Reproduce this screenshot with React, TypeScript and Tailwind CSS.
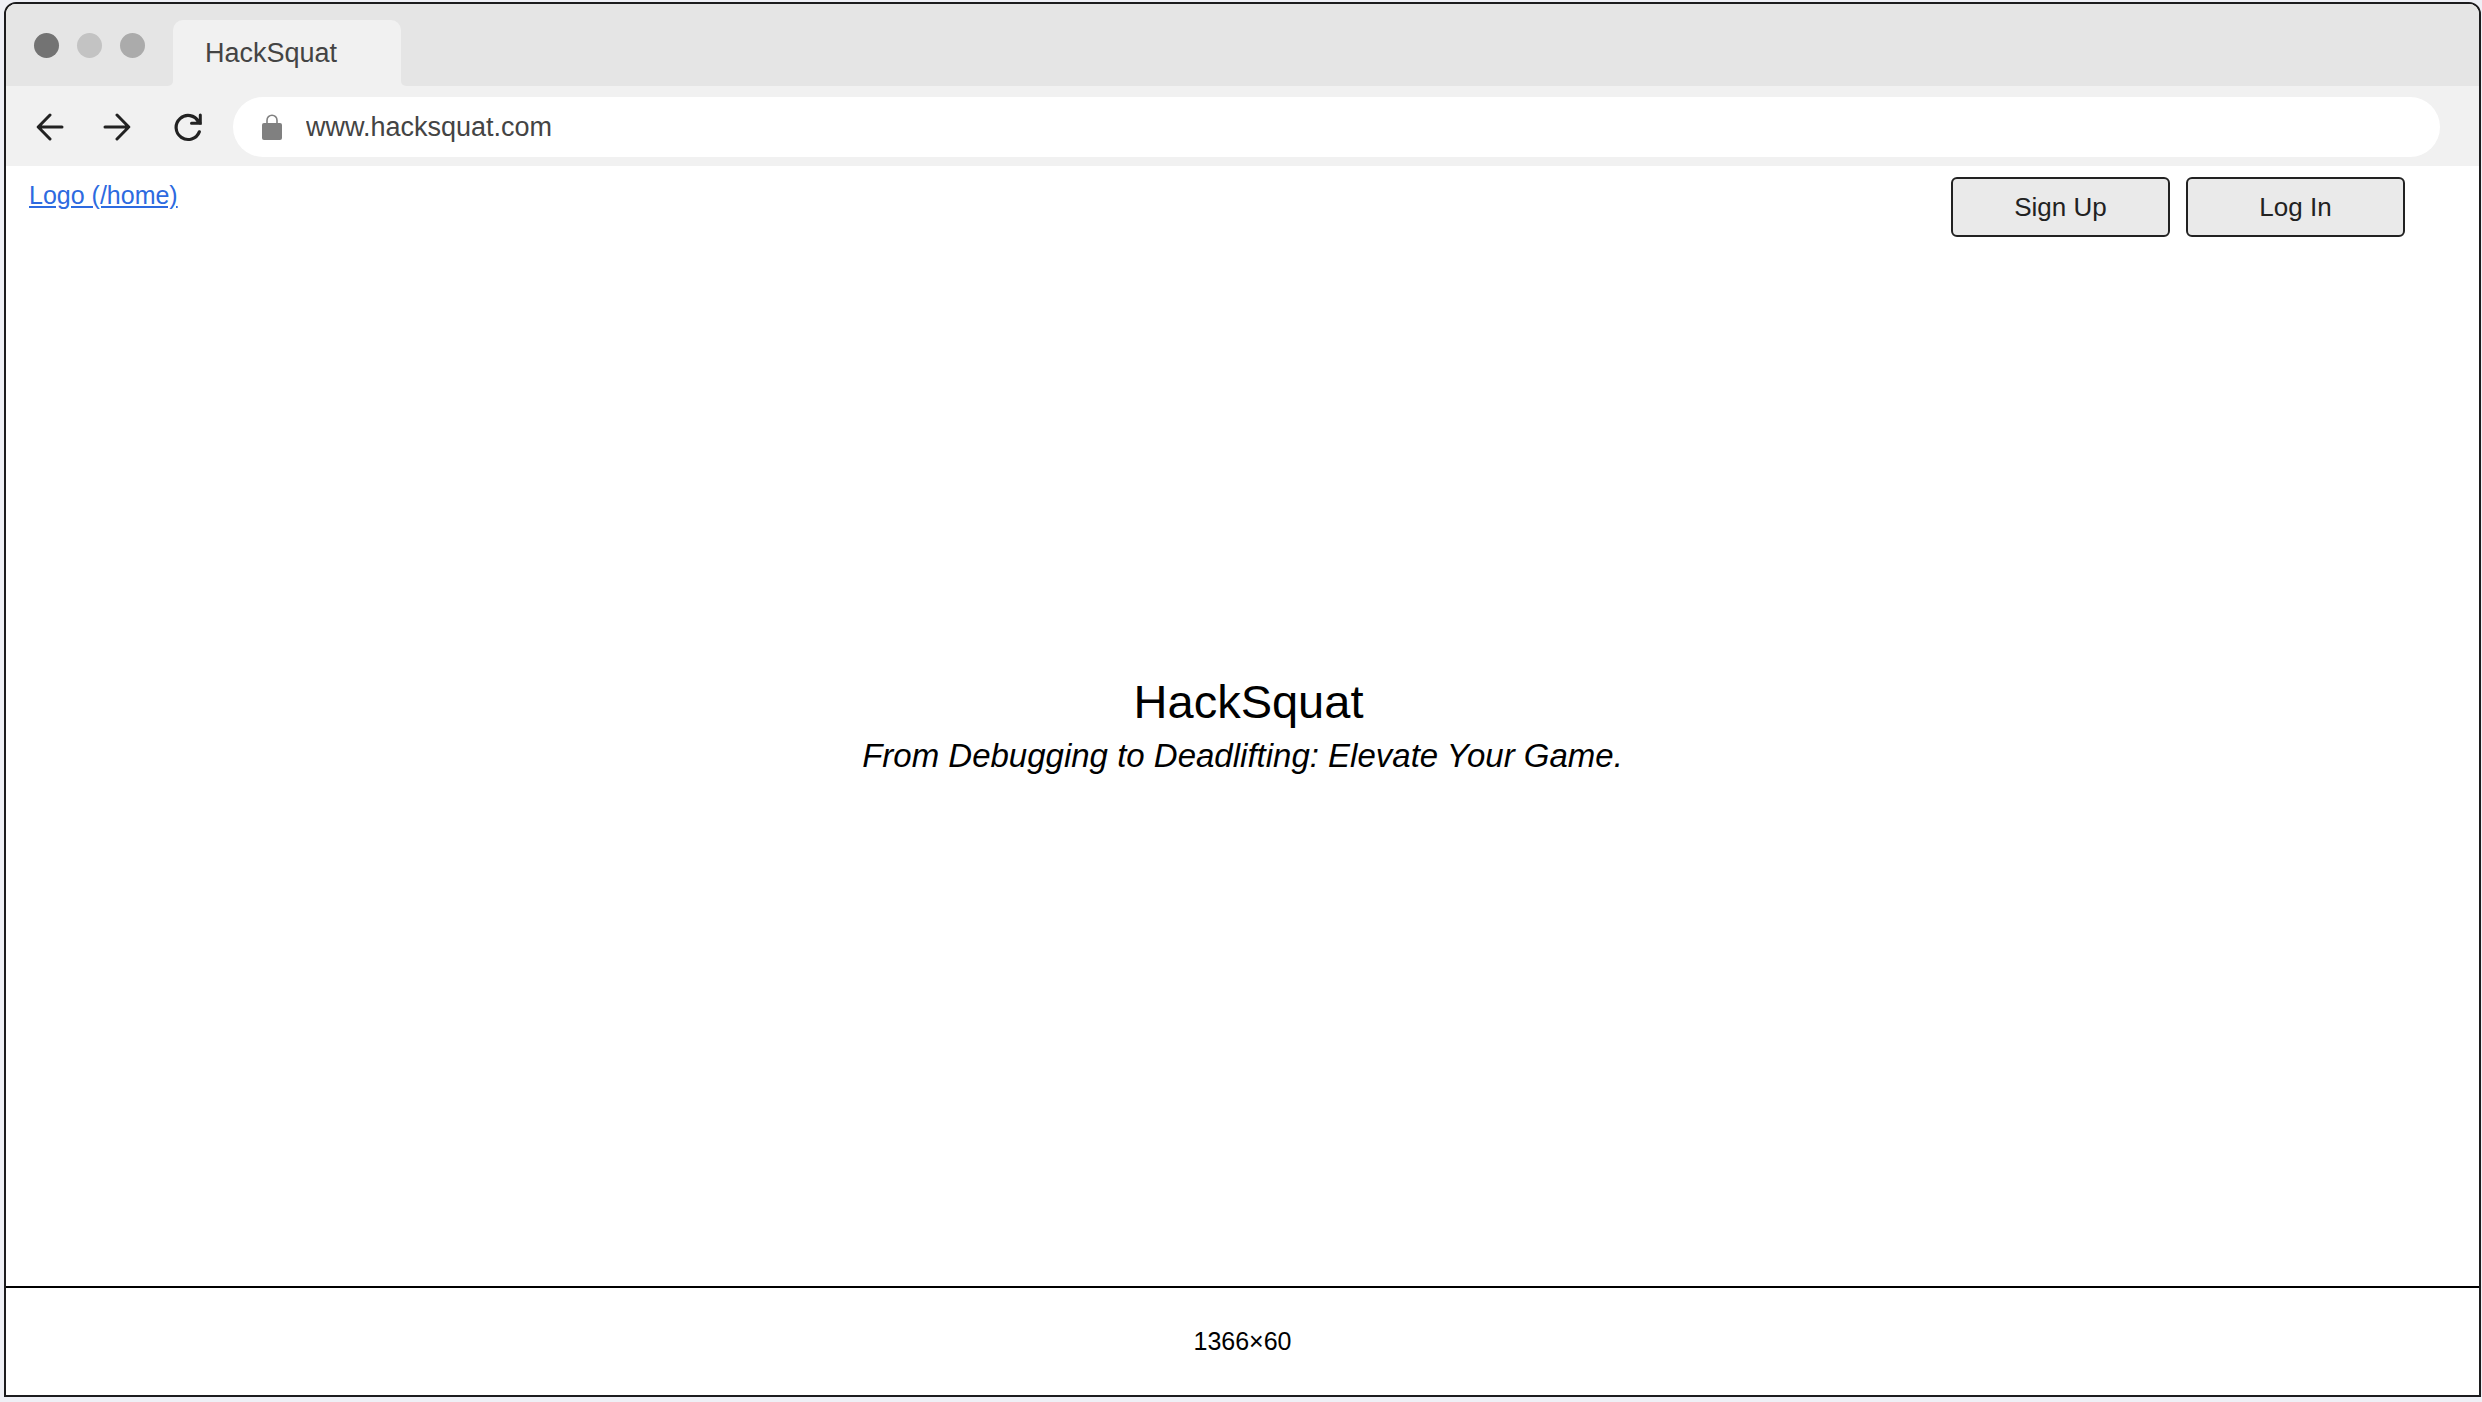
import React from "react";

function BackIcon() {
  return (
    <svg width="28" height="28" viewBox="0 0 28 28" fill="none" stroke="#222222" strokeWidth="3" strokeLinecap="round" strokeLinejoin="round" aria-hidden="true">
      <path d="M26 14H2.5M14 2L2.2 14L14 26" />
      <path d="M5 11.5L2.2 14L5 16.5Z" fill="#222222" strokeWidth="2" />
    </svg>
  );
}

function ForwardIcon() {
  return (
    <svg width="28" height="28" viewBox="0 0 28 28" fill="none" stroke="#222222" strokeWidth="3" strokeLinecap="round" strokeLinejoin="round" aria-hidden="true">
      <path d="M2 14H25.5M14 2L25.8 14L14 26" />
      <path d="M23 11.5L25.8 14L23 16.5Z" fill="#222222" strokeWidth="2" />
    </svg>
  );
}

function ReloadIcon() {
  return (
    <svg width="30" height="30" viewBox="0 0 30 30" fill="none" stroke="#222222" strokeWidth="3" strokeLinecap="round" strokeLinejoin="round" aria-hidden="true">
      <path d="M26.3 19.8A12 12 0 1 1 25.6 9.6" strokeWidth="3.2" />
      <path d="M27.3 3V11.2H18.5" strokeLinejoin="miter" />
      <path d="M24 8L27 11" />
    </svg>
  );
}

function LockIcon() {
  return (
    <svg width="20" height="26" viewBox="0 0 20 26" fill="none" aria-hidden="true" className="shrink-0">
      <path d="M5 10V6.2A5 5 0 0 1 15 6.2V10" stroke="#808080" strokeWidth="1.6" />
      <rect x="0" y="9" width="20" height="17" rx="2" fill="#808080" />
    </svg>
  );
}

function TabStrip() {
  return (
    <div className="flex h-[82px] bg-[#f1f1f1]">
      <div className="flex w-[167px] shrink-0 items-start gap-[18px] rounded-br-[5px] bg-[#e5e5e5] pt-[29px] pl-7">
        <span className="size-[25px] rounded-full bg-[#737373]" />
        <span className="size-[25px] rounded-full bg-[#c3c3c3]" />
        <span className="size-[25px] rounded-full bg-[#ababab]" />
      </div>
      <div className="flex w-[228px] shrink-0 bg-[#e5e5e5] pt-4">
        <div className="flex flex-1 items-center rounded-t-[10px] bg-[#f1f1f1] pl-8 text-[27px] text-[#444444]">
          HackSquat
        </div>
      </div>
      <div className="flex-1 rounded-bl-[5px] bg-[#e5e5e5]" />
    </div>
  );
}

function Toolbar() {
  return (
    <div className="flex h-20 items-center bg-[#f1f1f1] pt-[2px] pr-[39px] pl-[30px]">
      <button type="button" aria-label="Back"><BackIcon /></button>
      <button type="button" aria-label="Forward" className="ml-[39px]"><ForwardIcon /></button>
      <button type="button" aria-label="Reload" className="ml-[42px]"><ReloadIcon /></button>
      <label className="ml-[30px] flex h-[60px] flex-1 items-center gap-6 rounded-full bg-white pl-[29px]">
        <LockIcon />
        <input
          type="text"
          aria-label="Address"
          defaultValue="www.hacksquat.com"
          className="min-w-0 flex-1 bg-transparent text-[27px] text-[#444444] outline-none"
        />
      </label>
    </div>
  );
}

function NavButton({ children }: { children: React.ReactNode }) {
  return (
    <button type="button" className="h-[60px] w-[219px] rounded-[6px] border-2 border-[#222222] bg-[#eaeaea] text-[26px] text-[#222222]">
      {children}
    </button>
  );
}

export default function App() {
  return (
    <div className="flex min-h-screen flex-col bg-[#eff0f6] pt-[2px] pr-px pb-[5px] pl-1 font-['Liberation_Sans',Arial,sans-serif] text-black">
      <div className="flex flex-1 flex-col overflow-hidden rounded-t-[12px] border-2 border-[#1c1c1e] bg-white">
        <TabStrip />
        <Toolbar />
        <header className="flex h-20 items-start justify-between pt-[11px] pr-[74px] pl-[23px]">
          <a href="#home" className="text-[25px] text-[#2d6ae0] underline">
            Logo (/home)
          </a>
          <nav className="flex gap-4">
            <NavButton>Sign Up</NavButton>
            <NavButton>Log In</NavButton>
          </nav>
        </header>
        <main className="flex flex-1 flex-col items-center justify-center pb-20 text-center">
          <h1 className="pl-3 text-[47px] leading-[60px]">HackSquat</h1>
          <p className="text-[33px] leading-[48px] italic">From Debugging to Deadlifting: Elevate Your Game.</p>
        </main>
        <footer className="flex h-[109px] items-center justify-center border-t-2 border-black text-[25px]">
          1366×60
        </footer>
      </div>
    </div>
  );
}
